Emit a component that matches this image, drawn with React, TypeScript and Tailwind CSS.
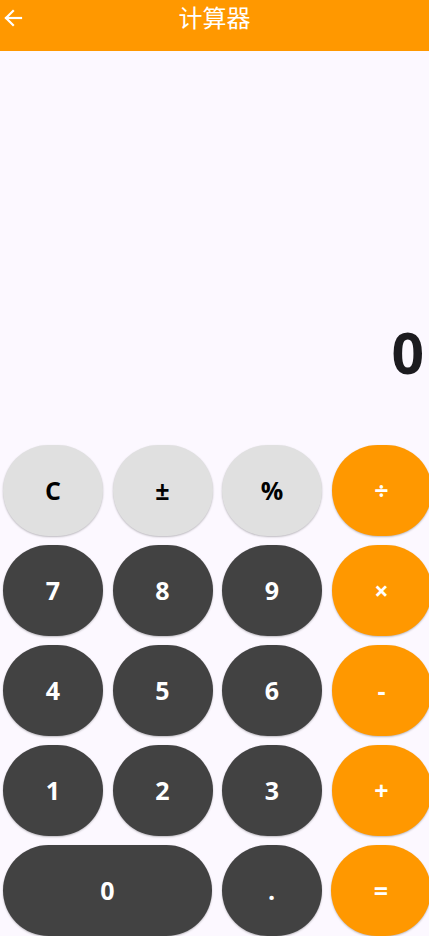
import React from "react";

type Btn = { label: string; kind: "fn" | "num" | "op"; wide?: boolean };

const rows: Btn[][] = [
  [{ label: "C", kind: "fn" }, { label: "±", kind: "fn" }, { label: "%", kind: "fn" }, { label: "÷", kind: "op" }],
  [{ label: "7", kind: "num" }, { label: "8", kind: "num" }, { label: "9", kind: "num" }, { label: "×", kind: "op" }],
  [{ label: "4", kind: "num" }, { label: "5", kind: "num" }, { label: "6", kind: "num" }, { label: "-", kind: "op" }],
  [{ label: "1", kind: "num" }, { label: "2", kind: "num" }, { label: "3", kind: "num" }, { label: "+", kind: "op" }],
  [{ label: "0", kind: "num", wide: true }, { label: ".", kind: "num" }, { label: "=", kind: "op" }],
];

function Key({ b }: { b: Btn }) {
  const color =
    b.kind === "fn"
      ? "bg-[#e0e0e0] text-black"
      : b.kind === "num"
      ? "bg-[#424242] text-white"
      : "bg-[#ff9800] text-white";
  return (
    <button
      className={`${color} ${b.wide ? "w-[209px]" : "w-[100px]"} h-[91px] shrink-0 rounded-full flex items-center justify-center text-[25px] font-bold shadow-[0_1px_2px_rgba(0,0,0,0.25)]`}
      style={{ fontFamily: "'Open Sans', 'Noto Sans', sans-serif" }}
    >
      {b.label}
    </button>
  );
}

export default function App() {
  return (
    <div className="w-[429px] h-[936px] bg-[#fcf8ff] flex flex-col overflow-hidden" style={{ fontFamily: "'Noto Sans', 'Noto Sans CJK SC', sans-serif" }}>
      <div className="h-[51px] bg-[#ff9800] relative flex items-start justify-center shrink-0">
        <svg className="absolute left-[3px] top-[8px]" width="20" height="20" viewBox="0 0 20 20" fill="none" stroke="white" strokeWidth="2.2" strokeLinecap="square">
          <path d="M18 10H3" />
          <path d="M10 3L3 10L10 17" />
        </svg>
        <span className="text-white text-[24px] leading-[34px]" style={{ fontFamily: "'Noto Sans CJK SC', sans-serif" }}>计算器</span>
      </div>
      <div className="flex-1 flex items-end justify-end pr-[5px] pb-[64px]">
        <span className="text-[57px] font-bold leading-none text-[#1c1b1f]" style={{ fontFamily: "'Open Sans', 'Noto Sans', sans-serif" }}>0</span>
      </div>
      <div className="flex flex-col gap-[9px] pl-[3px]">
        {rows.map((r, i) => (
          <div key={i} className="flex gap-[9.5px]">
            {r.map((b) => (
              <Key key={b.label} b={b} />
            ))}
          </div>
        ))}
      </div>
    </div>
  );
}
